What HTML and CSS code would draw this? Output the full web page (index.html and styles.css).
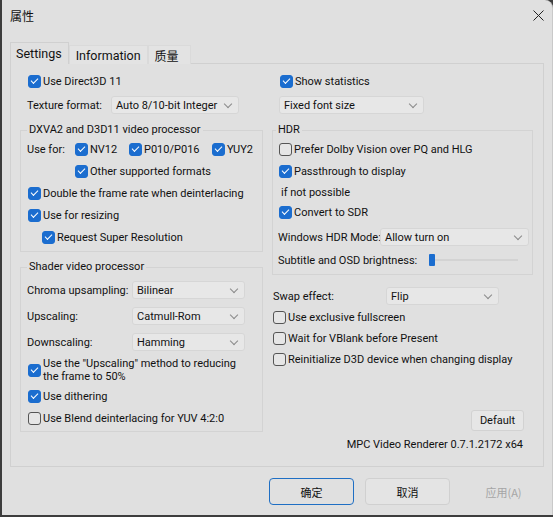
FILE: index.html
```html
<!DOCTYPE html>
<html>
<head>
<meta charset="utf-8">
<link rel="stylesheet" href="styles.css">
</head>
<body>
<div class="window">
  <div class="titlebar">
    <span class="title">属性</span>
    <svg class="close" width="11" height="11" viewBox="0 0 11 11"><path d="M0.5 0.5 L10.5 10.5 M10.5 0.5 L0.5 10.5" stroke="#222" stroke-width="1" fill="none"/></svg>
  </div>
  <div class="tabs">
    <div class="tab active">Settings</div>
    <div class="tab">Information</div>
    <div class="tab cjk">质量</div>
  </div>
  <div class="panel">
    <div class="col left">
      <div class="row h20 ind8"><span class="cb on"></span>Use Direct3D 11</div>
      <div class="row h20 ind7 mt4"><span class="lbl w84">Texture format:</span><span class="dd w128">Auto 8/10-bit Integer<i class="chev"></i></span></div>
      <fieldset class="group">
        <legend>DXVA2 and D3D11 video processor</legend>
        <div class="row h22"><span class="lbl w48">Use for:</span><span class="item w54"><span class="cb on"></span>NV12</span><span class="item w83"><span class="cb on"></span>P010/P016</span><span class="item"><span class="cb on"></span>YUY2</span></div>
        <div class="row h22 pl48"><span class="cb on"></span>Other supported formats</div>
        <div class="row h22 pl1"><span class="cb on"></span>Double the frame rate when deinterlacing</div>
        <div class="row h22 pl1"><span class="cb on"></span>Use for resizing</div>
        <div class="row h22 pl15"><span class="cb on"></span>Request Super Resolution</div>
      </fieldset>
      <fieldset class="group shader">
        <legend>Shader video processor</legend>
        <div class="row h26 mt2"><span class="lbl w105">Chroma upsampling:</span><span class="dd w113">Bilinear<i class="chev"></i></span></div>
        <div class="row h26"><span class="lbl w105">Upscaling:</span><span class="dd w113">Catmull-Rom<i class="chev"></i></span></div>
        <div class="row h26"><span class="lbl w105">Downscaling:</span><span class="dd w113">Hamming<i class="chev"></i></span></div>
        <div class="row h26 mt2 pl1"><span class="cb on"></span><span class="two">Use the "Upscaling" method to reducing<br>the frame to 50%</span></div>
        <div class="row h22 mt2 pl1"><span class="cb on"></span>Use dithering</div>
        <div class="row h22 pl1"><span class="cb"></span>Use Blend deinterlacing for YUV 4:2:0</div>
      </fieldset>
    </div>
    <div class="col right">
      <div class="row h20 ind8"><span class="cb on"></span>Show statistics</div>
      <div class="row h20 ind7 mt4"><span class="dd w145">Fixed font size<i class="chev"></i></span></div>
      <fieldset class="group hdr">
        <legend>HDR</legend>
        <div class="row h22"><span class="cb"></span>Prefer Dolby Vision over PQ and HLG</div>
        <div class="row h22"><span class="cb on"></span>Passthrough to display</div>
        <div class="row h20 pl2">if not possible</div>
        <div class="row h20"><span class="cb on"></span>Convert to SDR</div>
        <div class="row h22 mt4 neg1"><span class="lbl w102">Windows HDR Mode:</span><span class="dd w149">Allow turn on<i class="chev"></i></span></div>
        <div class="row h20 mt2 neg1"><span class="lbl w151">Subtitle and OSD brightness:</span><span class="thumb"></span><span class="track"></span></div>
      </fieldset>
      <div class="row h22 mt10 pl1"><span class="lbl w113">Swap effect:</span><span class="dd w113">Flip<i class="chev"></i></span></div>
      <div class="row h21 pl1"><span class="cb"></span>Use exclusive fullscreen</div>
      <div class="row h21 pl1"><span class="cb"></span>Wait for VBlank before Present</div>
      <div class="row h21 pl1"><span class="cb"></span>Reinitialize D3D device when changing display</div>
      <div class="default-wrap"><span class="btn-default">Default</span></div>
      <div class="version">MPC Video Renderer 0.7.1.2172 x64</div>
    </div>
  </div>
  <div class="buttons">
    <span class="btn primary cjk">确定</span>
    <span class="btn cjk">取消</span>
    <span class="btn disabled cjk">应用(A)</span>
  </div>
</div>
</body>
</html>
```
FILE: styles.css
```css
* { box-sizing: border-box; }
html, body { margin: 0; padding: 0; }
body {
  width: 553px;
  height: 517px;
  overflow: hidden;
  background: #3d3d3d;
  font-family: Roboto, "Noto Sans CJK SC", sans-serif;
  font-size: 11px;
  color: #111;
}
.window {
  margin-left: 2px;
  width: 551px;
  height: 515px;
  background: #e0e0e0;
  border-top-right-radius: 8px;
  border-right: 1px solid #c9c9c9;
  display: flex;
  flex-direction: column;
}
.titlebar {
  height: 30px;
  display: flex;
  align-items: center;
  justify-content: space-between;
  padding: 0 8px 0 8px;
}
.title { font-family: "Noto Sans CJK SC", sans-serif; font-size: 12px; }
.close { display: block; margin-top: 1px; }
.tabs {
  margin-top: 12px;
  height: 22px;
  margin-bottom: -1px;
  padding-left: 8px;
  display: flex;
  align-items: flex-end;
  position: relative;
  z-index: 1;
}
.tab {
  height: 19px;
  padding: 0 6px;
  font-size: 12.5px;
  display: flex;
  align-items: center;
  background: #e3e3e3;
  border: 1px solid #dadada;
  border-bottom: none;
}
.tab.active {
  height: 22px;
  padding: 0 6px 0 5px;
  background: #e0e0e0;
  border-color: #d0d0d0;
}
.tab.cjk { font-family: "Noto Sans CJK SC", sans-serif; font-size: 12px; padding: 0 11px 0 6px; }
.panel {
  margin-left: 8px;
  width: 534px;
  height: 404px;
  border: 1px solid #d0d0d0;
  padding: 7px 0 0 9px;
  display: flex;
  gap: 9px;
}
.col { display: flex; flex-direction: column; }
.left { width: 243px; }
.right { width: 261px; }
.row { display: flex; align-items: center; white-space: nowrap; }
.h20 { height: 20px; }
.h21 { height: 21px; }
.h22 { height: 22px; }
.h26 { height: 26px; }
.mt2 { margin-top: 2px; }
.mt4 { margin-top: 4px; }
.mt10 { margin-top: 10px; }
.ind8 { padding-left: 8px; }
.ind7 { padding-left: 7px; }
.pl1 { padding-left: 1px; }
.pl2 { padding-left: 2px; }
.pl15 { padding-left: 15px; }
.pl48 { padding-left: 48px; }
.neg1 { margin-left: -1px; }
.lbl { flex: none; }
.w48 { width: 48px; }
.w84 { width: 84px; }
.w102 { width: 102px; }
.w105 { width: 105px; }
.w113 { width: 113px; }
.w151 { width: 151px; }
.item { display: flex; align-items: center; flex: none; }
.item.w54 { width: 54px; }
.item.w83 { width: 83px; }
.dd {
  flex: none;
  height: 18px;
  background: #e7e7e7;
  border: 1px solid #d6d6d6;
  border-radius: 3px;
  display: flex;
  align-items: center;
  justify-content: space-between;
  padding: 0 7px 0 4px;
}
.dd.w113 { width: 113px; }
.dd.w128 { width: 128px; }
.dd.w145 { width: 145px; }
.dd.w149 { width: 149px; }
.chev {
  width: 6px;
  height: 6px;
  border-right: 1px solid #8a8a8a;
  border-bottom: 1px solid #8a8a8a;
  transform: rotate(45deg);
  margin-top: -3px;
}
.cb {
  flex: none;
  width: 13px;
  height: 13px;
  border: 1px solid #555;
  border-radius: 3px;
  margin-right: 2px;
  background: #e6e6e6;
  display: flex;
  align-items: center;
  justify-content: center;
}
.cb.on {
  background: #1b6dcf;
  border-color: #1b6dcf;
}
.cb.on::after {
  content: "";
  width: 6px;
  height: 3px;
  border-left: 1px solid #fff;
  border-bottom: 1px solid #fff;
  transform: rotate(-45deg);
  margin-top: -2px;
}
.group {
  margin: 7px 0 0 0;
  padding: 0 0 3px 6px;
  border: 1px solid #d3d3d3;
  min-width: 0;
}
.group legend {
  padding: 0 2px;
  margin-left: 0;
  line-height: 16px;
}
.shader { padding-bottom: 2px; }
.hdr { padding-bottom: 4px; }
.hdr legend { margin-left: -3px; }
.two { line-height: 13px; }
.thumb {
  flex: none;
  width: 6px;
  height: 12px;
  background: #1b6dcf;
  border-radius: 1px;
}
.track {
  flex: none;
  width: 83px;
  height: 2px;
  background: #d3d3d3;
}
.default-wrap {
  margin-top: 40px;
  display: flex;
  justify-content: flex-end;
  padding-right: 9px;
}
.btn-default {
  width: 53px;
  height: 21px;
  border: 1px solid #d2d2d2;
  border-radius: 3px;
  background: #e6e6e6;
  display: flex;
  align-items: center;
  justify-content: center;
}
.version {
  margin-top: 6px;
  line-height: 16px;
  text-align: right;
  padding-right: 10px;
}
.buttons {
  margin-top: 11px;
  display: flex;
  justify-content: flex-end;
  gap: 11px;
  padding-right: 6px;
}
.btn {
  width: 85px;
  height: 27px;
  border: 1px solid #d0d0d0;
  border-radius: 4px;
  background: #e4e4e4;
  display: flex;
  align-items: center;
  justify-content: center;
}
.cjk { font-family: "Noto Sans CJK SC", sans-serif; }
.btn.primary { border-color: #1f6fc4; background: #e0e0e0; }
.btn.disabled { border-color: transparent; background: transparent; color: #a5a5a5; }
```
